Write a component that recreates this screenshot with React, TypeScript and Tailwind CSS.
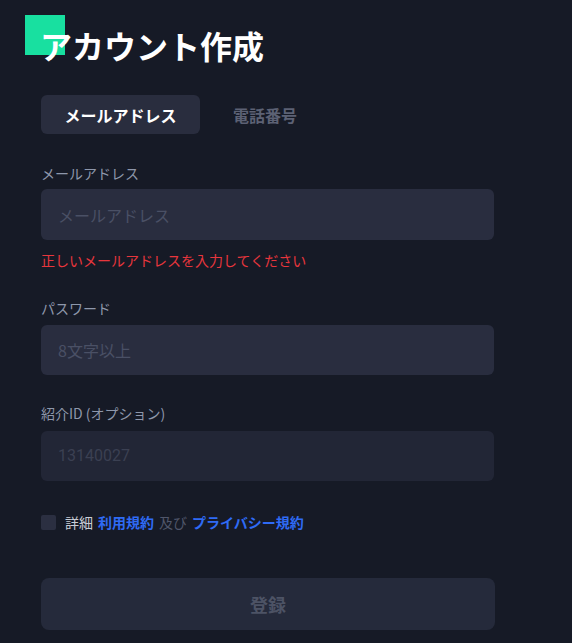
import React from "react";

const font = { fontFamily: '"Noto Sans CJK JP", "Noto Sans", sans-serif' };

export default function App() {
  return (
    <div className="min-h-[643px] w-[572px] bg-[#161a26] pl-[41px]" style={font}>
      <div className="relative pt-[23px]">
        <div className="absolute left-[-16px] top-[15px] h-[40px] w-[40px] bg-[#18e0a0]" />
        <h1 className="relative ml-[-1px] text-[32px] font-bold leading-[44px] text-white">アカウント作成</h1>
      </div>
      <div className="mt-[28px] flex h-[39px] items-center">
        <div className="flex h-[39px] w-[159px] items-center justify-center rounded-[6px] bg-[#292d3e] text-[16px] font-bold text-white">
          メールアドレス
        </div>
        <div className="ml-[33px] text-[16px] font-bold text-[#5c6174]">電話番号</div>
      </div>
      <div className="mt-[29px] w-[453px]">
        <div className="text-[14px] leading-[20px] text-[#8e97ab]">メールアドレス</div>
        <div className="mt-[6px] flex h-[51px] items-center rounded-[6px] bg-[#292d3f] pl-[17px] text-[16px] text-[#4a5065]">
          メールアドレス
        </div>
        <div className="mt-[10px] text-[14px] leading-[20px] text-[#e8363d]">正しいメールアドレスを入力してください</div>

        <div className="mt-[28px] text-[14px] leading-[20px] text-[#8e97ab]">パスワード</div>
        <div className="mt-[7px] flex h-[50px] items-center rounded-[6px] bg-[#292d3f] pl-[17px] text-[16px] text-[#4a5065]">
          8文字以上
        </div>

        <div className="mt-[28px] text-[14px] leading-[20px] text-[#8e97ab]">紹介ID (オプション)</div>
        <div className="mt-[8px] flex h-[50px] items-center rounded-[6px] bg-[#222636] pl-[17px] text-[16px] text-[#3b4052]" style={{ fontFamily: 'Roboto, "Noto Sans CJK JP", sans-serif' }}>
          13140027
        </div>

        <div className="mt-[31px] flex items-center text-[14px] leading-[20px]">
          <div className="h-[15px] w-[15px] rounded-[2px] bg-[#2b2f41]" />
          <span className="ml-[9px] text-[#c9cdd6]">詳細</span>
          <span className="ml-[5px] font-bold text-[#2f6bf5]">利用規約</span>
          <span className="ml-[5px] text-[#50566a]">及び</span>
          <span className="ml-[5px] font-bold text-[#2f6bf5]">プライバシー規約</span>
        </div>

        <div className="mt-[46px] flex h-[52px] w-[454px] items-center justify-center rounded-[8px] bg-[#252a3b] text-[18px] font-bold text-[#4d5365]">
          登録
        </div>
      </div>
    </div>
  );
}
